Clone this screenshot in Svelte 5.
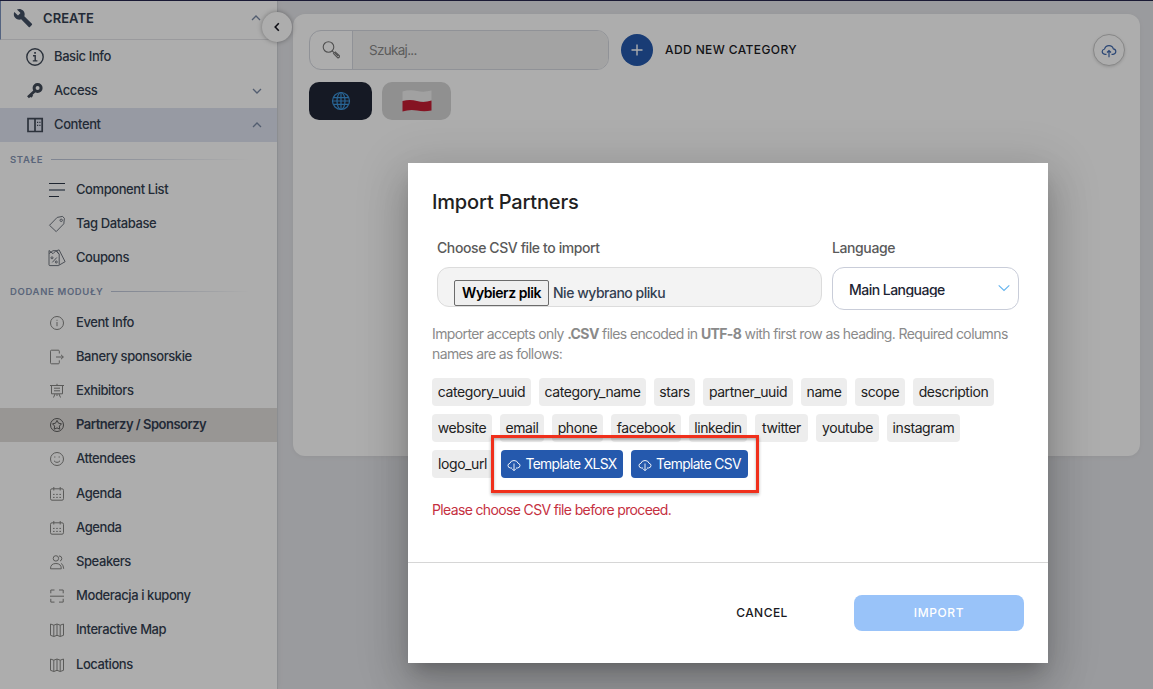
<script lang="ts">
    interface Item {
        label: string;
        icon: string;
        active?: boolean;
    }

    const icons: Record<string, string> = {
        tag: 'M1.5 10.3 9.2 2.4 14.6 1.4 16.4 3.4 15.8 8.8 8.2 16.6ZM12 5.3a1.2 1.2 0 1 0 2.4 0 1.2 1.2 0 1 0-2.4 0',
        coupons: 'M1 1.5v14.3q0 .8 1 .8h8.4q.8 0 .8-.8V5.2L8.5 1.7H5L1 4.6M1 1.5l4 3.2 3-3 3 3.5M8.5 1.7l2.6-.8 6 11.8-5.7 3.3M3 8.8a1 1 0 1 0 2 0 1 1 0 1 0-2 0M4.3 13.4 8.8 8.5M7.3 13a1 1 0 1 0 2 0 1 1 0 1 0-2 0',
        info: 'M2.5 9a6.5 6.5 0 1 0 13 0 6.5 6.5 0 1 0-13 0M9 8v4.2M9 5.8v1',
        exit: 'M11.3 5.5V3.2q0-1-1-1H3.5q-1 0-1 1v11.6q0 1 1 1h6.8q1 0 1-1v-2.4M8 9h7.3M13 6.8 15.3 9 13 11.2',
        board: 'M2 3.5h14M3.5 3.5v8.3h11V3.5M9 1.8v1.7M6 6.2h6M6 8.8h6M7 12l-1.5 3.5M11 12l1.5 3.5M9 12v2',
        star: 'M2.5 9a6.5 6.5 0 1 0 13 0 6.5 6.5 0 1 0-13 0M9 4.4l1.5 2.8 3 .6-2.1 2.3.4 3.1L9 11.9l-2.8 1.3.4-3.1-2.1-2.3 3-.6Z',
        smile: 'M2.5 9a6.5 6.5 0 1 0 13 0 6.5 6.5 0 1 0-13 0M6 10.8q3 3.2 6 0M6.2 7h1.2M10.6 7h1.2',
        calendar: 'M4 3.8h10q1.5 0 1.5 1.5v8.4q0 1.5-1.5 1.5H4q-1.5 0-1.5-1.5V5.3q0-1.5 1.5-1.5M5.8 2v3.5M12.2 2v3.5M5 9.4h1.6M8.2 9.4h1.6M11.4 9.4H13M5 12.4h1.6M8.2 12.4h1.6M11.4 12.4H13',
        people: 'M5.2 5.4a2.7 2.7 0 1 0 5.4 0 2.7 2.7 0 1 0-5.4 0M2.5 15.8q0-5.3 5.4-5.3t5.4 5.3ZM11 2.9q2.8.2 2.8 2.5T12 8M13 10.4q2.5 1 2.7 5.4',
        scan: 'M2.8 6.3V3h3.7M11 3h4.2v3.3M2 9.2h14M2.8 11.8v3.3h3.7M11 15.1h4.2v-3.3',
        map: 'M2.5 3l3.3 1.2L9 3l3.2 1.2L15.5 3v11.3l-3.3 1.2L9 14.3l-3.2 1.2-3.3-1.2ZM5.8 4.2v11.3M9 3v11.3M12.2 4.2v11.3'
    };

    const fixed: Item[] = [
        { label: 'Component List', icon: 'list' },
        { label: 'Tag Database', icon: 'tag' },
        { label: 'Coupons', icon: 'coupons' }
    ];

    const modules: Item[] = [
        { label: 'Event Info', icon: 'info' },
        { label: 'Banery sponsorskie', icon: 'exit' },
        { label: 'Exhibitors', icon: 'board' },
        { label: 'Partnerzy / Sponsorzy', icon: 'star', active: true },
        { label: 'Attendees', icon: 'smile' },
        { label: 'Agenda', icon: 'calendar' },
        { label: 'Agenda', icon: 'calendar' },
        { label: 'Speakers', icon: 'people' },
        { label: 'Moderacja i kupony', icon: 'scan' },
        { label: 'Interactive Map', icon: 'map' },
        { label: 'Locations', icon: 'map' }
    ];

    // column name and chip width
    const columns: [string, number][] = [
        ['category_uuid', 99], ['category_name', 107], ['stars', 41], ['partner_uuid', 90],
        ['name', 46], ['scope', 50], ['description', 81], ['website', 60], ['email', 44],
        ['phone', 51], ['facebook', 70], ['linkedin', 58], ['twitter', 53], ['youtube', 63],
        ['instagram', 73], ['logo_url', 61]
    ];

    const templates: [string, number][] = [['Template XLSX', 122], ['Template CSV', 117]];
</script>

{#snippet chevron(up: boolean)}
    <svg class="chevron" class:up viewBox="0 0 10 10"><path d="M1 3l4 4 4-4" /></svg>
{/snippet}

{#snippet menu(items: Item[])}
    {#each items as item}
        <a class="sub-item" class:active={item.active} class:dark={item.icon === 'tag' || item.icon === 'coupons'} href="#top">
            {#if item.icon === 'list'}
                <svg class="sub-icon" viewBox="0 0 18 18">
                    <path d="M1 2.5h16M1 15.5h10" stroke="#2d3748" />
                    <path d="M1 9h16" stroke="#8a929e" stroke-width="2" />
                </svg>
            {:else}
                <svg class="sub-icon" viewBox="0 0 18 18"><path d={icons[item.icon]} /></svg>
            {/if}
            <span>{item.label}</span>
        </a>
    {/each}
{/snippet}

<div class="app">
    <aside class="sidebar">
        <div class="group-header">
            <svg class="wrench" viewBox="0 0 24 24"><path d="M22.7 19l-9.1-9.1c.9-2.3.4-5-1.5-6.9-2-2-5-2.4-7.4-1.3L9 6 6 9 1.6 4.7C.4 7.1.9 10.1 2.9 12.1c1.9 1.9 4.6 2.4 6.9 1.5l9.1 9.1c.4.4 1 .4 1.4 0l2.3-2.3c.5-.4.5-1.1.1-1.4z" /></svg>
            <span>CREATE</span>
            {@render chevron(true)}
        </div>
        <a class="item" href="#top">
            <svg class="item-icon" viewBox="0 0 20 20">
                <circle cx="10" cy="10" r="8.2" />
                <path d="M8 8.7h2.2v5M7.8 13.9h4.6" />
                <path d="M9.2 5.9h1.7" stroke-width="1.8" />
            </svg>
            <span>Basic Info</span>
        </a>
        <a class="item" href="#top">
            <svg class="item-icon" viewBox="0 0 20 20">
                <circle cx="12.6" cy="7" r="3.5" stroke-width="3" />
                <path d="M10 9.8 3 16.2M5.5 14l1.7 1.7" stroke-width="2.8" />
            </svg>
            <span>Access</span>
            {@render chevron(false)}
        </a>
        <a class="item open" href="#top">
            <svg class="item-icon" viewBox="0 0 20 20">
                <path d="M3 3.7h14.2v12.8H3ZM10 3.7v12.8" stroke-width="1.7" />
                <path d="M12 7.4h1.2M14.3 7.4h1.2M12 10.4h1.2M14.3 10.4h1.2" stroke-width="1.4" />
            </svg>
            <span>Content</span>
            {@render chevron(true)}
        </a>
        <div class="section"><span>STAŁE</span><i></i></div>
        {@render menu(fixed)}
        <div class="section"><span>DODANE MODUŁY</span><i></i></div>
        {@render menu(modules)}
    </aside>

    <main>
        <section class="card">
            <div class="toolbar">
                <div class="search">
                    <div class="search-icon">
                        <svg viewBox="0 0 20 20">
                            <circle cx="7.5" cy="7" r="5.3" />
                            <path d="M11.2 10.8l2 2M12.5 13.6l1.8-1.7 4 3.6q.7 2-1.5 2.4ZM14 13.2l3.2 3" />
                        </svg>
                    </div>
                    <div class="search-input">Szukaj...</div>
                </div>
                <button class="add"><svg viewBox="0 0 12 12"><path d="M6 .5v11M.5 6h11" /></svg></button>
                <span class="add-label">ADD NEW CATEGORY</span>
                <button class="upload">
                    <svg viewBox="0 0 16 16"><path d="M5.5 11.3H4q-2.8-.2-2.8-2.7 0-2 2.3-2.6Q4.5 2.6 8 2.6t4.3 3.2q2.5.3 2.5 2.8T12 11.3h-1.5M8 14.3V8M6 9.5 8 7.6l2 1.9" /></svg>
                </button>
            </div>
            <div class="langs">
                <button class="lang selected">
                    <svg class="globe" viewBox="0 0 20 20">
                        <circle cx="10" cy="10" r="8.5" />
                        <ellipse cx="10" cy="10" rx="4" ry="8.5" />
                        <path d="M10 1.5v17M1.5 10h17M2.5 6.7h15M2.5 13.3h15" />
                    </svg>
                </button>
                <button class="lang">
                    <svg class="flag" viewBox="0 0 30 22">
                        <path d="M.5 1.5Q8-.5 15 1T29.5.5v11H.5Z" fill="#eee" />
                        <path d="M.5 11Q8 9 15 11t14.5-.5v10Q22 22 15 20.5T.5 21.5Z" fill="#c51c33" />
                    </svg>
                </button>
            </div>
        </section>
    </main>

    <button class="collapse" aria-label="Collapse"><svg viewBox="0 0 10 10"><path d="M6.8 1.2 3.2 5l3.6 3.8" /></svg></button>
    <div class="backdrop"></div>

    <div class="modal">
        <div class="modal-body">
            <h2>Import Partners</h2>
            <div class="fields">
                <div class="field file">
                    <span class="field-label">Choose CSV file to import</span>
                    <div class="file-box">
                        <button>Wybierz plik</button>
                        <span>Nie wybrano pliku</span>
                    </div>
                </div>
                <div class="field">
                    <span class="field-label">Language</span>
                    <div class="select">
                        <span>Main Language</span>
                        <svg viewBox="0 0 12 8"><path d="M.7 1.3 6 6.5l5.3-5.2" /></svg>
                    </div>
                </div>
            </div>
            <p class="hint">Importer accepts only <b>.CSV</b> files encoded in <b>UTF-8</b> with first row as heading. Required columns<br />names are as follows:</p>
            <div class="chips">
                {#each columns as [name, width]}
                    <span class="chip" style="width: {width}px">{name}</span>
                {/each}
                {#each templates as [name, width]}
                    <button class="template" style="width: {width}px">
                        <svg viewBox="0 0 14 14"><path d="M5 10H3.5Q1 9.7 1 7.5q0-1.8 2-2.3Q3.8 2.5 7 2.5t4 2.7q2 .5 2 2.3Q13 9.7 10.5 10H9M7 5.5v7M5 10.7l2 2 2-2" /></svg>
                        {name}
                    </button>
                {/each}
                <div class="highlight"></div>
            </div>
            <p class="error">Please choose CSV file before proceed.</p>
        </div>
        <div class="modal-footer">
            <button class="cancel">CANCEL</button>
            <button class="import">IMPORT</button>
        </div>
    </div>
</div>

<style>
    :global(body) {
        overflow: hidden;
    }

    .app {
        position: relative;
        box-sizing: border-box;
        display: flex;
        width: 1153px;
        height: 689px;
        overflow: hidden;
        border-top: 1px solid #1a1a35;
        background: #e4e5e9;
        font-family: Inter, "Liberation Sans", sans-serif;
        font-size: 13px;
        color: #343f51;
    }

    .app :global(*) {
        box-sizing: border-box;
    }

    button {
        padding: 0;
        border: none;
        font: inherit;
        color: inherit;
    }

    a {
        color: inherit;
        text-decoration: none;
    }

    svg {
        display: block;
        flex-shrink: 0;
        fill: none;
        stroke: currentColor;
    }

    .sidebar {
        flex: 0 0 278px;
        height: 688px;
        overflow: hidden;
        background: #fff;
        border-right: 1px solid #cfd1d6;
        box-shadow: 0 0 6px rgba(0, 0, 0, 0.06);
        white-space: nowrap;
    }

    .group-header {
        display: flex;
        align-items: center;
        height: 39px;
        padding: 0 16px 4px 12px;
        border-left: 1px solid #7c93bd;
        border-bottom: 1px solid #e4e4e7;
        font-weight: 600;
        letter-spacing: 0.05px;
    }

    .group-header span {
        margin-left: 10px;
    }

    .wrench {
        width: 20px;
        height: 20px;
        fill: #414e63;
        stroke: none;
    }

    .chevron {
        width: 10px;
        height: 10px;
        margin-left: auto;
        stroke: #7a8aa5;
        stroke-width: 1.3;
    }

    .chevron.up {
        transform: rotate(180deg);
    }

    .item {
        display: flex;
        align-items: center;
        height: 34.15px;
        padding: 0 15px 0 25px;
        font-weight: 500;
        letter-spacing: -0.4px;
    }

    .item span {
        margin-left: 9px;
        padding-bottom: 2px;
    }

    .item.open {
        background: #dfe3f0;
    }

    .item-icon {
        width: 20px;
        height: 20px;
        stroke: #414a58;
        stroke-width: 1.4;
    }

    .section {
        display: flex;
        align-items: center;
        gap: 8px;
        height: 30.3px;
        padding: 3px 28px 0 10px;
        font-size: 9.5px;
        font-weight: 600;
        letter-spacing: 0.65px;
        color: #8595b4;
    }

    .section i {
        flex: 1;
        height: 1px;
        background: linear-gradient(90deg, #bcc4d6, #fff);
    }

    .sub-item {
        display: flex;
        align-items: center;
        height: 34.2px;
        padding-left: 48px;
        font-weight: 500;
        letter-spacing: -0.42px;
    }

    .sub-item span {
        padding-bottom: 2px;
    }

    .sub-item.active {
        background: #e1dddb;
        font-weight: 600;
        letter-spacing: -0.5px;
    }

    .sub-icon {
        width: 18px;
        height: 18px;
        margin-right: 10px;
        stroke: #858583;
        stroke-width: 1;
    }

    .dark .sub-icon {
        stroke: #606672;
        stroke-width: 0.9;
    }

    .active .sub-icon {
        stroke: #5d5d5d;
    }

    main {
        flex: 1;
        padding: 13px 13px 0 15px;
    }

    .card {
        height: 442px;
        padding: 16px 15px 16px 16px;
        border-radius: 12px;
        background: #fff;
        box-shadow: 0 1px 5px rgba(0, 0, 0, 0.05);
    }

    .toolbar {
        display: flex;
        align-items: center;
        height: 40px;
    }

    .search {
        display: flex;
        width: 300px;
        height: 40px;
        border: 1px solid #d5d8df;
        border-radius: 12px;
        overflow: hidden;
    }

    .search-icon {
        display: flex;
        align-items: center;
        justify-content: center;
        width: 43px;
        border-right: 1px solid #d5d8df;
    }

    .search-icon svg {
        width: 20px;
        height: 20px;
        stroke: #777;
        stroke-width: 1.1;
    }

    .search-input {
        display: flex;
        flex: 1;
        align-items: center;
        padding-left: 16px;
        background: #f1f1f1;
        color: #888;
        font-size: 13.5px;
        letter-spacing: -0.7px;
    }

    .add {
        display: flex;
        align-items: center;
        justify-content: center;
        width: 32px;
        height: 32px;
        margin-left: 12px;
        border-radius: 50%;
        background: #2559ad;
        color: #fff;
    }

    .add svg {
        width: 12px;
        height: 12px;
        stroke-width: 1.4;
    }

    .add-label {
        margin-left: 12px;
        padding-bottom: 1px;
        font-size: 12px;
        font-weight: 500;
        letter-spacing: 0.4px;
        color: #1b1b1f;
    }

    .upload {
        display: flex;
        align-items: center;
        justify-content: center;
        width: 32px;
        height: 32px;
        margin-left: auto;
        border: 1px solid #c8c8c8;
        border-radius: 50%;
        background: #fff;
        box-shadow: 0 1px 3px rgba(0, 0, 0, 0.15);
        color: #3f68ad;
    }

    .upload svg {
        width: 16px;
        height: 16px;
        margin-top: 2px;
        stroke-width: 1.2;
    }

    .langs {
        display: flex;
        gap: 10px;
        margin-top: 12px;
    }

    .lang {
        display: flex;
        align-items: center;
        justify-content: center;
        width: 69px;
        height: 38px;
        border-radius: 10px;
        background: #d4d4d4;
    }

    .lang.selected {
        width: 63px;
        background: #202636;
    }

    .globe {
        width: 20px;
        height: 20px;
        stroke: #3c95dc;
        stroke-width: 1.2;
    }

    .flag {
        width: 30px;
        height: 22px;
        stroke: none;
    }

    .collapse {
        position: absolute;
        top: 11px;
        left: 262px;
        display: flex;
        align-items: center;
        justify-content: center;
        width: 30px;
        height: 30px;
        border-radius: 50%;
        background: #fff;
        box-shadow: 0 0 5px rgba(0, 0, 0, 0.35);
        color: #15151f;
    }

    .collapse svg {
        width: 10px;
        height: 10px;
        stroke-width: 1.6;
    }

    .backdrop {
        position: absolute;
        inset: -1px 0 0;
        background: rgba(0, 0, 0, 0.32);
    }

    .modal {
        position: absolute;
        top: 162px;
        left: 408px;
        display: flex;
        flex-direction: column;
        width: 640px;
        height: 500px;
        background: #fff;
        box-shadow: 0 11px 15px -7px rgba(0, 0, 0, 0.2), 0 24px 38px 3px rgba(0, 0, 0, 0.14), 0 9px 46px 8px rgba(0, 0, 0, 0.12);
        white-space: nowrap;
    }

    .modal-body {
        flex: 1;
        padding: 24px 24px 0;
    }

    h2 {
        margin: 0;
        font-size: 20px;
        font-weight: 500;
        line-height: 30px;
        letter-spacing: -0.17px;
        color: #212121;
    }

    .fields {
        display: flex;
        gap: 10px;
        height: 107px;
        padding: 21px 5px 0;
    }

    .field.file {
        width: 385px;
    }

    .field-label {
        display: block;
        height: 29px;
        font-size: 14px;
        font-weight: 500;
        line-height: 20px;
        letter-spacing: -0.4px;
        color: #5a5a5a;
    }

    .file-box {
        display: flex;
        align-items: flex-end;
        height: 40px;
        padding-left: 16px;
        border: 1px solid #dcdcdc;
        border-radius: 12px;
        background: #f3f3f3;
        font-size: 14px;
        font-weight: 500;
        line-height: 26px;
        letter-spacing: -0.48px;
    }

    .file-box button {
        width: 95px;
        height: 26px;
        margin-right: 4px;
        border: 1px solid #6b6b6b;
        border-radius: 2px;
        background: #efefef;
        font-weight: 600;
        line-height: 24px;
        letter-spacing: -0.45px;
        color: #000;
    }

    .select {
        display: flex;
        align-items: center;
        justify-content: space-between;
        width: 187px;
        height: 43px;
        padding: 1px 8px 0 16px;
        border: 1px solid #c9cdd9;
        border-radius: 12px;
        font-size: 14px;
        font-weight: 500;
        letter-spacing: -0.53px;
        color: #1d2433;
    }

    .select span {
        height: 15px;
        line-height: 16px;
        overflow: hidden;
    }

    .select svg {
        width: 12px;
        height: 8px;
        margin-top: -2px;
        stroke: #63b3ed;
        stroke-width: 1.1;
    }

    .hint {
        margin: 0;
        font-size: 14px;
        line-height: 20px;
        letter-spacing: -0.61px;
        color: #8a8a8a;
    }

    .chips {
        position: relative;
        display: flex;
        flex-wrap: wrap;
        gap: 8px;
        margin-top: 14px;
    }

    .chip,
    .template {
        display: flex;
        align-items: center;
        justify-content: center;
        height: 28px;
        padding-bottom: 1px;
        border-radius: 4px;
        background: #ededed;
        font-size: 14px;
        letter-spacing: -0.42px;
        color: #212121;
    }

    .template {
        gap: 4px;
        background: #2559ad;
        font-size: 13.8px;
        letter-spacing: -0.62px;
        color: #fff;
    }

    .template svg {
        width: 14px;
        height: 14px;
        margin-top: 2px;
        stroke-width: 0.9;
    }

    .highlight {
        position: absolute;
        top: 57px;
        left: 59px;
        width: 268px;
        height: 58px;
        border: 3px solid #f0301c;
        box-shadow: 0 2px 3px rgba(0, 0, 0, 0.3), inset 0 2px 3px rgba(0, 0, 0, 0.3);
        pointer-events: none;
    }

    .error {
        margin: 22px 0 0;
        font-size: 14px;
        line-height: 20px;
        letter-spacing: -0.64px;
        color: #c5303f;
    }

    .modal-footer {
        display: flex;
        align-items: center;
        justify-content: flex-end;
        height: 101px;
        padding: 0 24px;
        border-top: 1px solid #d6d6d6;
        font-size: 12px;
        font-weight: 500;
    }

    .cancel {
        width: 184px;
        height: 36px;
        padding-bottom: 2px;
        background: none;
        letter-spacing: 0.45px;
        color: #1a1a22;
    }

    .import {
        width: 170px;
        height: 36px;
        padding-bottom: 2px;
        border-radius: 8px;
        background: #99c3f9;
        letter-spacing: 0.6px;
        color: #fff;
    }
</style>
